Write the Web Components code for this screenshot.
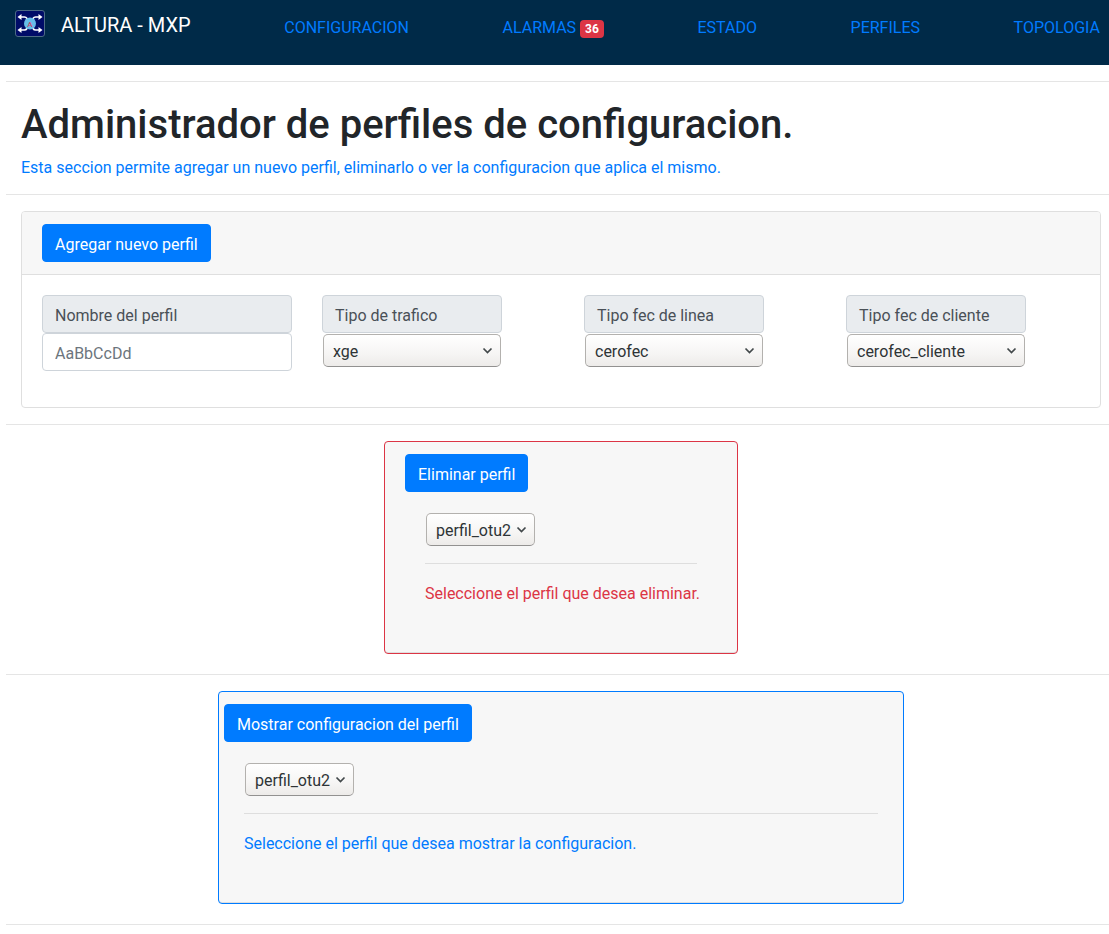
<!DOCTYPE html>
<html lang="es">
<head>
<meta charset="utf-8">
<meta name="viewport" content="width=device-width, initial-scale=1">
<title>ALTURA - MXP</title>
<style>
  body { margin: 0; background: #fff; color: #212529; font: 400 16px/24px Roboto, "Liberation Sans", sans-serif; }
</style>
</head>
<body>
<mxp-navbar>
  <mxp-nav-link href="#configuracion">CONFIGURACION</mxp-nav-link>
  <mxp-nav-link href="#alarmas" count="36">ALARMAS</mxp-nav-link>
  <mxp-nav-link href="#estado">ESTADO</mxp-nav-link>
  <mxp-nav-link href="#perfiles">PERFILES</mxp-nav-link>
  <mxp-nav-link href="#topologia">TOPOLOGIA</mxp-nav-link>
</mxp-navbar>
<mxp-profiles-page></mxp-profiles-page>

<script>
const define = (name, html, setup) => {
  const template = document.createElement('template');
  template.innerHTML = '<style>*{box-sizing:border-box} :host{box-sizing:border-box}</style>' + html;
  customElements.define(name, class extends HTMLElement {
    constructor() {
      super();
      this.attachShadow({ mode: 'open' }).append(template.content.cloneNode(true));
    }
    connectedCallback() {
      if (setup) setup(this, this.shadowRoot);
    }
  });
};

define('mxp-logo', `
  <style>
    :host { display: block; width: 30px; height: 28px; }
    svg { display: block; }
  </style>
  <svg width="30" height="28" viewBox="0 0 30 28" aria-hidden="true">
    <rect x=".5" y=".5" width="29" height="26" rx="2.5" fill="#000c68" stroke="#4d6b84"/>
    <g fill="none" stroke="#fff" stroke-width="1.6">
      <path d="M5 7h4.500q1.500 0 2.500 1.500l2 3M25 7h-4.500q-1.500 0-2.500 1.500l-2 3M5 20h4.500q1.500 0 2.500-1.500l2-3M25 20h-4.500q-1.500 0-2.500-1.500l-2-3"/>
    </g>
    <path fill="#fff" d="M2.500 7 6.500 4v6zM27.500 7 23.500 4v6zM2.500 20 6.500 17v6zM27.500 20 23.500 17v6z"/>
    <circle cx="15" cy="13.500" r="6" fill="#66bde8"/>
    <text x="15" y="16.500" text-anchor="middle" font-family="Roboto, sans-serif" font-size="8" font-weight="500" fill="#c64a68">A</text>
  </svg>`);

define('mxp-nav-link', `
  <style>
    :host { display: block; white-space: nowrap; }
    a { color: #007bff; text-decoration: none; }
    .badge { display: inline-block; padding: 3px 5px; border-radius: 4px; background: #dc3545; color: #fff;
             font-size: 12px; font-weight: 700; line-height: 12px; }
  </style>
  <a><slot></slot></a>`, (host, root) => {
    const link = root.querySelector('a');
    link.href = host.getAttribute('href');
    if (host.hasAttribute('count') && !root.querySelector('.badge')) {
      const badge = document.createElement('span');
      badge.className = 'badge';
      badge.textContent = host.getAttribute('count');
      link.append(' ', badge);
    }
  });

define('mxp-navbar', `
  <style>
    :host { display: block; }
    nav { display: flex; justify-content: space-between; align-items: flex-start; min-height: 65px;
          padding: 10px 9px 8px 15px; background: #002a48; }
    .brand { display: flex; gap: 16px; color: #fff; font-size: 20px; line-height: 30px; text-decoration: none; white-space: nowrap; }
    ::slotted(*) { padding-top: 6px; }
  </style>
  <nav>
    <a class="brand" href="#inicio"><mxp-logo></mxp-logo><span>ALTURA - MXP</span></a>
    <slot></slot>
  </nav>`);

define('mxp-button', `
  <style>
    :host { display: inline-block; vertical-align: top; }
    button { display: block; padding: 8px 12px 4px; border: 1px solid #007bff; border-radius: 4px;
             background: #007bff; color: #fff; font: inherit; cursor: pointer; }
  </style>
  <button type="button"><slot></slot></button>`);

const labelStyle = `
  label { display: block; padding: 8px 12px 4px; border: 1px solid #ced4da; border-radius: 4px;
          background: #e9ecef; color: #495057; }`;

define('mxp-text-field', `
  <style>
    :host { display: block; width: 250px; }
    ${labelStyle}
    input { display: block; width: 100%; height: 38px; padding: 8px 12px 6px; border: 1px solid #ced4da;
            border-radius: 4px; background: #fff; color: #495057; font: inherit; }
    input::placeholder { color: #6c757d; opacity: 1; }
  </style>
  <label for="field"></label>
  <input id="field" type="text">`, (host, root) => {
    root.querySelector('label').textContent = host.getAttribute('label');
    root.querySelector('input').placeholder = host.getAttribute('placeholder');
  });

define('mxp-select', `
  <style>
    :host { display: block; }
    :host([label]) { width: 180px; }
    ${labelStyle}
    label:empty { display: none; }
    .box { position: relative; width: fit-content; margin: 0 1px; }
    :host([label]) .box { width: auto; margin-top: 1px; }
    select { appearance: none; display: block; width: 100%; height: 33px; margin: 0; padding: 2px 22px 0 9px;
             border: 1px solid #b3b1ae; border-bottom-color: #929190; border-radius: 5px;
             background: linear-gradient(#fff, #f6f5f4 60%, #edebe9); color: #2e3436; font: inherit; }
    svg { position: absolute; right: 8px; top: 12px; pointer-events: none; }
  </style>
  <label for="field"></label>
  <div class="box">
    <select id="field"></select>
    <svg width="11" height="9" viewBox="0 0 11 9" aria-hidden="true">
      <path d="M1.500 2.500l4 4 4-4" fill="none" stroke="#42484a" stroke-width="1.700"/>
    </svg>
  </div>`, (host, root) => {
    root.querySelector('label').textContent = host.getAttribute('label') || '';
    const select = root.querySelector('select');
    if (host.hasAttribute('name')) select.setAttribute('aria-label', host.getAttribute('name'));
    select.replaceChildren(...host.getAttribute('options').split(',').map(text => new Option(text)));
  });

define('mxp-new-profile', `
  <style>
    :host { display: block; border: 1px solid #dfdfdf; border-radius: 4px; overflow: hidden; }
    header { padding: 12px 20px; border-bottom: 1px solid #dfdfdf; background: #f7f7f7; }
    form { display: grid; grid-template-columns: 280px 1fr 1fr 234px; padding: 20px 20px 36px; }
  </style>
  <header><mxp-button>Agregar nuevo perfil</mxp-button></header>
  <form>
    <mxp-text-field label="Nombre del perfil" placeholder="AaBbCcDd"></mxp-text-field>
    <mxp-select label="Tipo de trafico" options="xge"></mxp-select>
    <mxp-select label="Tipo fec de linea" options="cerofec"></mxp-select>
    <mxp-select label="Tipo fec de cliente" options="cerofec_cliente"></mxp-select>
  </form>`);

define('mxp-action-card', `
  <style>
    :host { display: block; width: 100%; margin: 0 auto; padding: 12px 20px 47px; border: 1px solid;
            border-radius: 4px; background: #f7f7f7; box-shadow: inset 0 -1px #dfdfdf; }
    :host([tone="danger"]) { color: #dc3545; max-width: 354px; }
    :host([tone="primary"]) { color: #007bff; max-width: 686px; padding-left: 5px; }
    .content { padding: 21px 20px 0; }
    :host([tone="primary"]) .content { padding-right: 5px; }
    hr { margin: 17px 0 18px; border: 0; border-top: 1px solid #dedede; }
    p { margin: 0; white-space: nowrap; }
  </style>
  <slot name="action"></slot>
  <div class="content">
    <slot name="field"></slot>
    <hr>
    <p><slot></slot></p>
  </div>`);

define('mxp-profiles-page', `
  <style>
    :host { display: block; padding: 16px 0 9px 6px; }
    hr { margin: 0; border: 0; border-top: 1px solid #e5e5e5; }
    section { padding: 16px 8px 16px 15px; }
    .intro { padding-top: 19px; padding-bottom: 14px; }
    .action { padding-bottom: 20px; }
    h1 { margin: 0 0 7px; font-size: 40px; font-weight: 500; line-height: 48px; }
    p { margin: 0; color: #007bff; }
  </style>
  <hr>
  <section class="intro">
    <h1>Administrador de perfiles de configuracion.</h1>
    <p>Esta seccion permite agregar un nuevo perfil, eliminarlo o ver la configuracion que aplica el mismo.</p>
  </section>
  <hr>
  <section><mxp-new-profile></mxp-new-profile></section>
  <hr>
  <section class="action">
    <mxp-action-card tone="danger">
      <mxp-button slot="action">Eliminar perfil</mxp-button>
      <mxp-select slot="field" name="Perfil a eliminar" options="perfil_otu2"></mxp-select>
      Seleccione el perfil que desea eliminar.
    </mxp-action-card>
  </section>
  <hr>
  <section class="action">
    <mxp-action-card tone="primary">
      <mxp-button slot="action">Mostrar configuracion del perfil</mxp-button>
      <mxp-select slot="field" name="Perfil a mostrar" options="perfil_otu2"></mxp-select>
      Seleccione el perfil que desea mostrar la configuracion.
    </mxp-action-card>
  </section>
  <hr>`);
</script>
</body>
</html>
